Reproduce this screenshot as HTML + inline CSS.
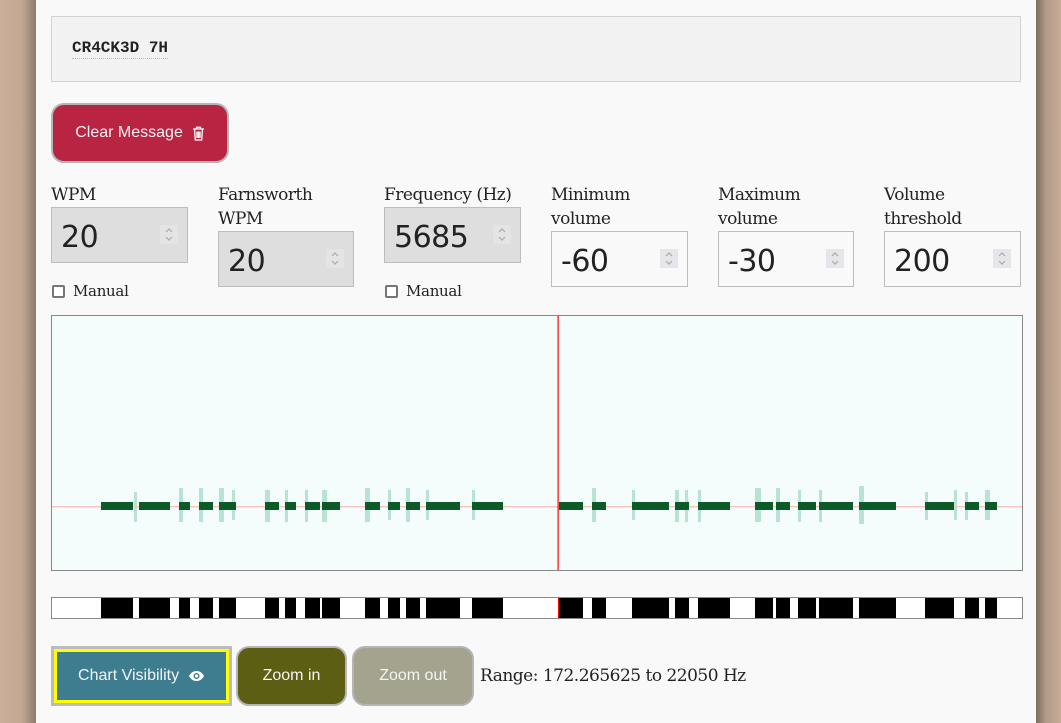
<!DOCTYPE html>
<html><head><meta charset="utf-8"><style>
*{box-sizing:border-box;margin:0;padding:0}
html,body{width:1061px;height:723px;overflow:hidden}
body{background:#c9ac97;position:relative;font-family:"Liberation Serif",serif}
.bgr{position:absolute;left:1036px;top:0;width:25px;height:723px;background:linear-gradient(90deg,#7d6c5f 0,#b19a88 10px,#c9ae99 25px)}
.bgl{position:absolute;left:0;top:0;width:36px;height:723px;background:linear-gradient(90deg,#c9ae99 0,#c2a792 22px,#8d7a6b 36px)}
.panel{position:absolute;left:36px;top:0;width:1000px;height:723px;background:#f9f9f9}
.abs{position:absolute}
.msg{left:51px;top:16px;width:970px;height:66px;background:#f2f2f2;border:1px solid #d2d2d2}
.msg span{position:absolute;left:20px;top:22px;font:bold 16px "Liberation Mono","DejaVu Sans Mono",monospace;color:#222;border-bottom:1px dotted #bbb;padding-bottom:1px}
.btn{position:absolute;color:#f4f4f4;font:16px "Liberation Sans",sans-serif;display:flex;align-items:center;justify-content:center;border:2px solid #b5b5b5;border-radius:13px}
.lab{position:absolute;font:17px/24px "DejaVu Serif","Liberation Serif",serif;color:#222;letter-spacing:-0.5px}
.inp{position:absolute;width:137px;height:56px;border:1px solid #bdbdbd;font:30px "DejaVu Sans","Liberation Sans",sans-serif;color:#222;padding:12px 0 0 9px;letter-spacing:-0.5px}
.inp.d{background:#dedede}
.inp.l{background:#f9f9f9}
.sp{position:absolute;right:9px;top:17px;width:18px;height:19px;background:#e6e6ea}
.inp.d .sp{background:#e4e4e4}
.cb{position:absolute;width:13px;height:13px;border:2px solid #767676;border-radius:2px;background:#fff}
.man{position:absolute;font:15px "DejaVu Serif","Liberation Serif",serif;color:#222;letter-spacing:-0.3px}
</style></head><body>
<div class="bgl"></div><div class="bgr"></div>
<div class="panel"></div>
<div class="abs msg"><span>CR4CK3D 7H</span></div>
<div class="btn" style="left:51px;top:103px;width:178px;height:60px;background:#b92442">Clear Message&nbsp;&nbsp;<svg width="13" height="15" viewBox="0 0 13 15"><path d="M1 3h11M4.5 3V1.3h4V3M2.5 3l.8 11h6.4l.8-11M5 5.5v6.5M6.5 5.5v6.5M8 5.5v6.5" stroke="#fff" stroke-width="1.3" fill="none"/></svg></div>

<svg width="0" height="0" style="position:absolute"><defs><symbol id="sp" viewBox="0 0 18 19"><path d="M6 7l3-3 3 3M6 12l3 3 3-3" stroke="#aaa" stroke-width="1.2" fill="none"/></symbol></defs></svg>

<div class="lab" style="left:51px;top:183px">WPM</div>
<div class="inp d" style="left:51px;top:207px">20<svg class="sp"><use href="#sp"/></svg></div>
<div class="cb" style="left:52px;top:285px"></div><div class="man" style="left:73px;top:282px">Manual</div>

<div class="lab" style="left:218px;top:183px">Farnsworth<br>WPM</div>
<div class="inp d" style="left:218px;top:231px;width:136px">20<svg class="sp"><use href="#sp"/></svg></div>

<div class="lab" style="left:384px;top:183px">Frequency (Hz)</div>
<div class="inp d" style="left:384px;top:207px">5685<svg class="sp"><use href="#sp"/></svg></div>
<div class="cb" style="left:385px;top:285px"></div><div class="man" style="left:406px;top:282px">Manual</div>

<div class="lab" style="left:551px;top:183px">Minimum<br>volume</div>
<div class="inp l" style="left:551px;top:231px">-60<svg class="sp"><use href="#sp"/></svg></div>
<div class="lab" style="left:718px;top:183px">Maximum<br>volume</div>
<div class="inp l" style="left:718px;top:231px;width:136px">-30<svg class="sp"><use href="#sp"/></svg></div>
<div class="lab" style="left:884px;top:183px">Volume<br>threshold</div>
<div class="inp l" style="left:884px;top:231px">200<svg class="sp"><use href="#sp"/></svg></div>

<div class="abs" style="left:51px;top:315px;width:972px;height:256px;background:#f5fcfc;border:1px solid #888"></div>
<div class="abs" style="left:51px;top:597px;width:972px;height:22px;background:#fff;border:1px solid #888"></div>
<svg class="abs" style="left:0;top:0" width="1061" height="723">
<g fill="#9fd8c0" opacity="0.7">
<rect x="134" y="492" width="3" height="30"/><rect x="179" y="488" width="4" height="34"/><rect x="199" y="488" width="4" height="34"/><rect x="219" y="488" width="5" height="34"/><rect x="232" y="490" width="3" height="30"/>
<rect x="265" y="490" width="5" height="32"/><rect x="285" y="490" width="3" height="32"/><rect x="305" y="490" width="3" height="32"/><rect x="322" y="490" width="5" height="32"/>
<rect x="365" y="488" width="5" height="34"/><rect x="388" y="490" width="3" height="30"/><rect x="406" y="488" width="4" height="34"/><rect x="426" y="490" width="3" height="30"/><rect x="472" y="490" width="3" height="30"/>
<rect x="592" y="488" width="4" height="34"/><rect x="632" y="490" width="3" height="30"/><rect x="675" y="490" width="4" height="32"/><rect x="685" y="490" width="3" height="32"/><rect x="698" y="490" width="3" height="32"/>
<rect x="755" y="488" width="6" height="34"/><rect x="776" y="488" width="4" height="34"/><rect x="798" y="490" width="3" height="32"/><rect x="819" y="490" width="3" height="32"/><rect x="859" y="486" width="5" height="38"/>
<rect x="925" y="492" width="3" height="28"/><rect x="954" y="490" width="3" height="30"/><rect x="965" y="492" width="3" height="28"/><rect x="985" y="490" width="5" height="30"/>
</g>
<rect x="52" y="506" width="970" height="1.5" fill="#f8c4c4"/>
<g fill="#0b5a27">
<rect x="101" y="502" width="32" height="8"/><rect x="139" y="502" width="31" height="8"/><rect x="179" y="502" width="11" height="8"/><rect x="199" y="502" width="14" height="8"/><rect x="219" y="502" width="17" height="8"/><rect x="265" y="502" width="14" height="8"/><rect x="285" y="502" width="11" height="8"/><rect x="305" y="502" width="15" height="8"/><rect x="322" y="502" width="18" height="8"/><rect x="365" y="502" width="15" height="8"/><rect x="388" y="502" width="12" height="8"/><rect x="406" y="502" width="14" height="8"/><rect x="426" y="502" width="34" height="8"/><rect x="472" y="502" width="31" height="8"/><rect x="559" y="502" width="24" height="8"/><rect x="592" y="502" width="14" height="8"/><rect x="632" y="502" width="37" height="8"/><rect x="675" y="502" width="14" height="8"/><rect x="698" y="502" width="32" height="8"/><rect x="755" y="502" width="18" height="8"/><rect x="776" y="502" width="14" height="8"/><rect x="798" y="502" width="18" height="8"/><rect x="819" y="502" width="34" height="8"/><rect x="859" y="502" width="37" height="8"/><rect x="925" y="502" width="29" height="8"/><rect x="965" y="502" width="14" height="8"/><rect x="985" y="502" width="12" height="8"/>
</g>
<rect x="557.5" y="316" width="1.2" height="254" fill="#f00"/>
<g fill="#000">
<rect x="101" y="598" width="32" height="20"/><rect x="139" y="598" width="31" height="20"/><rect x="179" y="598" width="11" height="20"/><rect x="199" y="598" width="14" height="20"/><rect x="219" y="598" width="17" height="20"/><rect x="265" y="598" width="14" height="20"/><rect x="285" y="598" width="11" height="20"/><rect x="305" y="598" width="15" height="20"/><rect x="322" y="598" width="18" height="20"/><rect x="365" y="598" width="15" height="20"/><rect x="388" y="598" width="12" height="20"/><rect x="406" y="598" width="14" height="20"/><rect x="426" y="598" width="34" height="20"/><rect x="472" y="598" width="31" height="20"/><rect x="559" y="598" width="24" height="20"/><rect x="592" y="598" width="14" height="20"/><rect x="632" y="598" width="37" height="20"/><rect x="675" y="598" width="14" height="20"/><rect x="698" y="598" width="32" height="20"/><rect x="755" y="598" width="18" height="20"/><rect x="776" y="598" width="14" height="20"/><rect x="798" y="598" width="18" height="20"/><rect x="819" y="598" width="34" height="20"/><rect x="859" y="598" width="37" height="20"/><rect x="925" y="598" width="29" height="20"/><rect x="965" y="598" width="14" height="20"/><rect x="985" y="598" width="12" height="20"/>
</g>
<rect x="558" y="598" width="1" height="20" fill="#f00"/>
</svg>

<div class="btn" style="left:51px;top:646px;width:181px;height:60px;background:#3e7d90;border:3px solid #bbb;border-radius:0;box-shadow:inset 0 0 0 3px #ff0">Chart Visibility&nbsp;&nbsp;<svg width="17" height="12" viewBox="0 0 17 12"><path d="M1 6C3 2.5 5.5 1 8.5 1S14 2.5 16 6C14 9.5 11.5 11 8.5 11S3 9.5 1 6Z" fill="#fff"/><circle cx="8.5" cy="6" r="3" fill="#3e7d90"/><circle cx="8.5" cy="6" r="1.6" fill="#fff"/></svg></div>
<div class="btn" style="left:236px;top:646px;width:111px;height:60px;background:#5c5e14">Zoom in</div>
<div class="btn" style="left:352px;top:646px;width:122px;height:60px;background:#a4a38e">Zoom out</div>
<div class="lab" style="left:480px;top:664px">Range: 172.265625 to 22050 Hz</div>
</body></html>
